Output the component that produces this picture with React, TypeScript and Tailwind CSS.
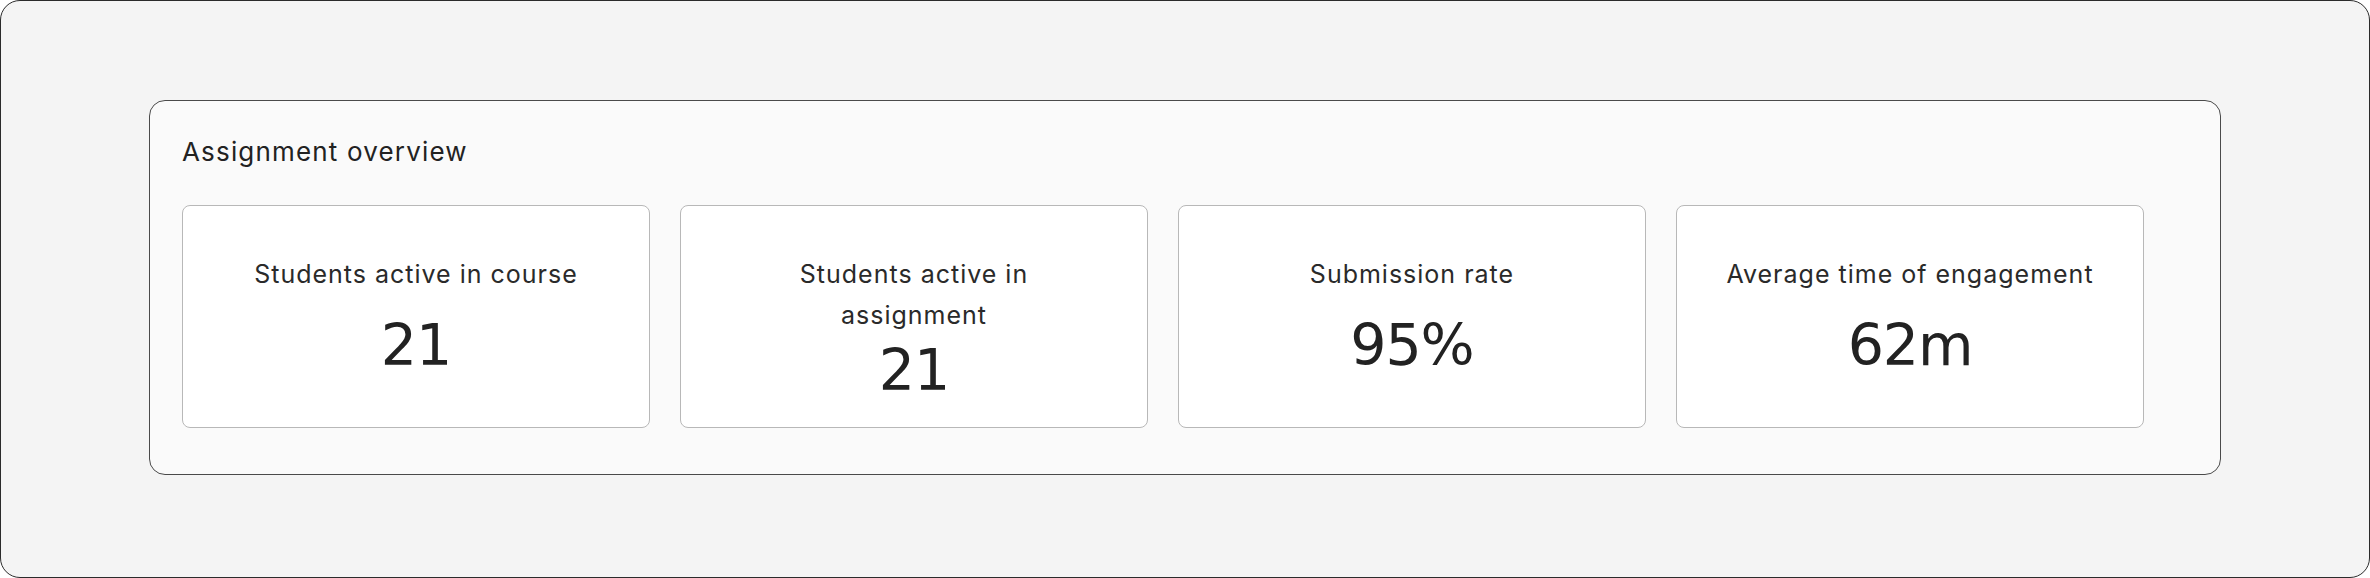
const stats = [
  { label: "Students active in course", value: "21" },
  { label: "Students active in assignment", value: "21" },
  { label: "Submission rate", value: "95%" },
  { label: "Average time of engagement", value: "62m" },
];

function StatCard({ label, value }: { label: string; value: string }) {
  return (
    <div className="flex h-[223px] w-[468px] shrink-0 flex-col items-center rounded-lg border border-[#b8b8b8] bg-white px-[47px] pt-12 text-center">
      <p className="min-h-[57px] text-[25px] leading-[41px] tracking-[0.04em] text-[#2a2a2a]">{label}</p>
      <p className="mt-[6px] font-['DejaVu_Sans',sans-serif] text-[57px] leading-none tracking-[-0.02em] text-[#222]">
        {value}
      </p>
    </div>
  );
}

export default function App() {
  return (
    <div className="h-[578px] w-full rounded-[20px] border border-[#2b2b2b] bg-[#f4f4f4] px-[148px] pt-[99px] font-['Inter',sans-serif]">
      <div className="rounded-2xl border border-[#4a4a4a] bg-[#fafafa] pb-[46px] pl-8 pt-[35px]">
        <h2 className="mb-[37px] text-[26px] leading-8 tracking-[0.045em] text-[#222]">Assignment overview</h2>
        <div className="flex gap-[30px]">
          {stats.map((s) => (
            <StatCard key={s.label} label={s.label} value={s.value} />
          ))}
        </div>
      </div>
    </div>
  );
}
